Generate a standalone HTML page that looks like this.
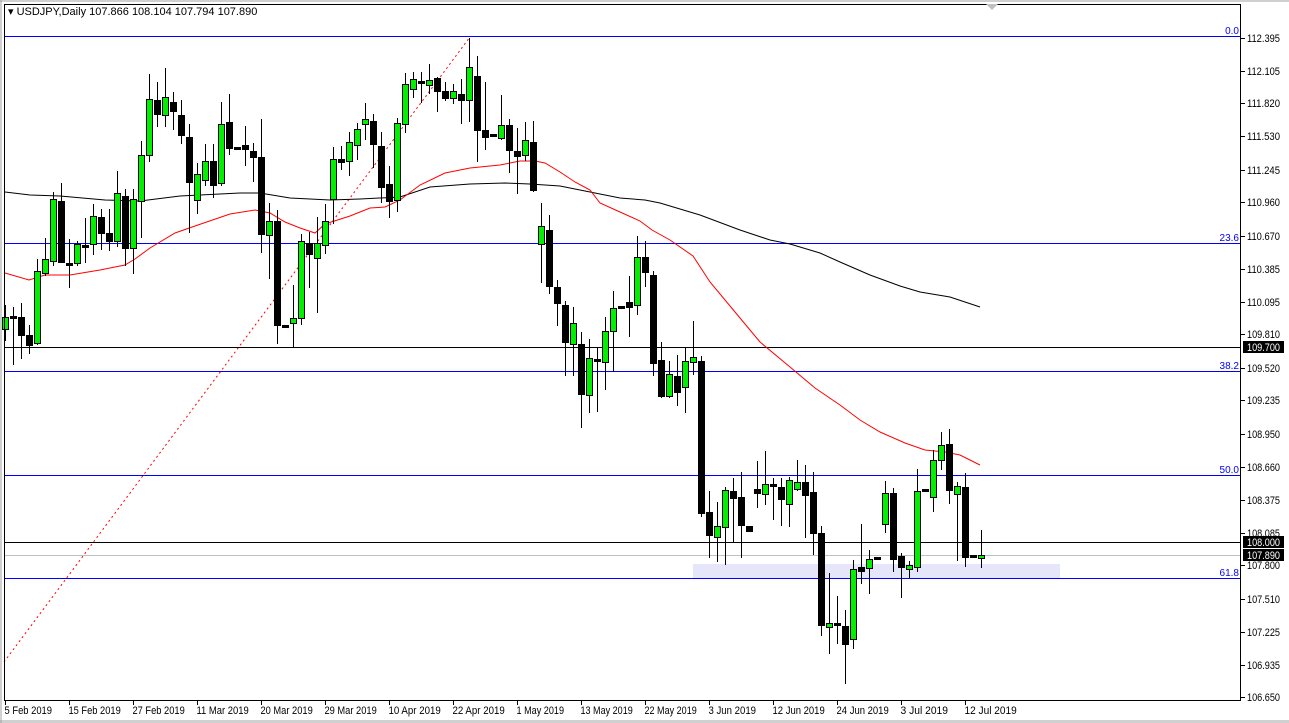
<!DOCTYPE html>
<html><head><meta charset="utf-8"><style>
html,body{margin:0;padding:0;background:#fff;}
svg{display:block;font-family:"Liberation Sans",sans-serif;}
</style></head><body>
<svg id="s" width="1289" height="723" xmlns="http://www.w3.org/2000/svg">
<rect x="0" y="0" width="1289" height="723" fill="#fff"/>
<line x1="0" y1="1" x2="1289" y2="1" stroke="#a0a0a0"/>
<line x1="0" y1="721.5" x2="1289" y2="721.5" stroke="#d0d0d0" stroke-width="3"/>
<line x1="1" y1="0" x2="1" y2="723" stroke="#a0a0a0"/>
<rect x="693" y="564" width="367" height="14" fill="#e6e6fa"/>
<g id="lines"></g>
<g id="cand"></g>
<rect x="4.5" y="4.5" width="1236" height="696" fill="none" stroke="#000"/>
<text x="8" y="15" font-size="11" fill="#000">▾ USDJPY,Daily  107.866 108.104 107.794 107.890</text>
<polygon points="986,4 998,4 992,10" fill="#c0c0c0"/>
<g id="axis" font-size="11"></g>
</svg>
<script>
var NS="http://www.w3.org/2000/svg";
function el(p,t,a,txt){var e=document.createElementNS(NS,t);for(var k in a)e.setAttribute(k,a[k]);if(txt!=null)e.textContent=txt;document.getElementById(p).appendChild(e);return e;}
[[36,"#0000ff"],[243,"#0000ff"],[347,"#000"],[371,"#0000ff"],[475,"#0000ff"],[542,"#000"],[555,"#c0c0c0"],[578,"#0000ff"]].forEach(function(l){
el("lines","line",{x1:5,x2:1240,y1:l[0]+0.5,y2:l[0]+0.5,stroke:l[1]});});
[["0.0",34],["23.6",241],["38.2",369],["50.0",473],["61.8",576]].forEach(function(f){
el("lines","text",{x:1239,y:f[1],"text-anchor":"end","font-size":"10",fill:"#0000ff"},f[0]);});
el("lines","line",{x1:4,y1:662,x2:470,y2:37,stroke:"#ff0000","stroke-dasharray":"2,3"});
var red=[[5,273],[29,280],[45,275],[70,275],[100,270],[125,265],[135,259],[150,248],[175,233],[195,226],[230,214],[255,210],[270,213],[285,222],[300,228],[315,233],[325,224],[350,216],[370,208],[385,207],[400,200],[420,185],[445,173],[470,168],[500,165],[520,161],[535,161],[545,163],[560,172],[575,182],[590,190],[600,203],[620,212],[640,221],[652,230],[670,240],[693,256],[710,282],[740,318],[760,342],[790,367],[815,388],[840,405],[860,420],[880,432],[905,443],[925,450],[945,452],[960,455],[980,465]];
var blk=[[5,192],[30,195],[60,196],[105,200],[140,201],[180,196],[240,193],[260,193],[290,198],[330,200],[360,199],[400,197],[430,187],[470,184],[505,183],[530,184],[560,186],[590,192],[620,198],[645,200],[660,203],[700,215],[740,230],[770,240],[790,244],[820,253],[840,262],[870,275],[900,286],[920,292],[950,297],[980,307]];
el("lines","polyline",{points:blk.join(" "),fill:"none",stroke:"#000"});
el("lines","polyline",{points:red.join(" "),fill:"none",stroke:"#ff0000"});
var C=[[317,329,305,340,1],[316,318,307,364,0],[317,335,303,358,0],[335,345,325,353,0],[271,343,259,344,1],[259,273,238,275,1],[199,261,192,265,1],[201,262,183,262,0],[263,265,239,287,0],[244,263,241,265,1],[245,247,218,262,0],[216,244,204,254,1],[217,233,209,249,0],[233,241,209,250,0],[193,241,171,246,1],[196,248,189,265,0],[199,248,189,273,1],[155,201,141,237,1],[99,155,74,161,1],[100,114,82,126,0],[97,115,68,126,1],[102,111,92,129,0],[115,135,100,143,0],[137,182,124,232,0],[174,200,163,213,1],[161,180,144,185,1],[161,185,144,197,0],[124,183,102,185,1],[122,148,94,154,0],[147,149,147,149,0],[145,149,126,165,0],[151,157,143,181,0],[157,234,119,252,0],[221,235,203,278,1],[221,325,210,343,0],[325,327,325,327,0],[318,323,285,347,1],[241,318,234,324,1],[243,254,232,287,0],[243,258,217,312,1],[221,245,204,253,1],
[159,199,147,223,1],[159,162,146,169,0],[142,161,132,175,1],[129,145,123,159,1],[119,124,103,139,1],[121,144,114,167,0],[146,187,132,202,0],[184,201,166,217,0],[123,200,118,211,1],[84,124,73,132,1],[79,89,72,97,1],[81,83,72,102,0],[80,85,64,93,1],[78,91,77,111,0],[91,98,82,100,0],[91,98,84,103,1],[94,100,79,123,0],[67,100,38,121,1],[76,130,56,161,0],[130,137,82,149,0],[134,136,134,136,0],[125,138,95,139,1],[125,150,119,172,0],[151,156,128,193,0],[140,155,122,160,1],[142,190,121,191,0],[226,244,203,282,1],[230,286,215,293,0],[287,303,280,325,0],[305,342,301,375,0],[323,344,307,375,1],[344,394,332,427,0],[358,395,339,412,1],[359,361,348,411,0],[331,362,317,389,1],[308,331,291,371,1],[306,308,306,308,0],[302,307,276,336,0],[257,305,236,314,1],[257,272,241,286,0],
[275,363,271,375,0],[360,396,342,397,0],[374,396,361,397,1],[376,392,355,405,0],[361,387,347,412,1],[357,362,321,374,1],[361,513,356,516,0],[512,535,491,557,0],[526,537,502,561,1],[490,527,487,564,1],[491,498,478,541,0],[497,525,472,557,0],[526,531,526,531,0],[489,493,461,507,0],[484,494,451,504,1],[484,486,478,519,0],[487,499,478,525,0],[480,504,477,526,1],[482,489,460,490,1],[482,495,465,537,0],[492,533,472,554,0],[533,625,526,635,0],[623,627,573,653,1],[623,625,596,643,0],[626,644,610,683,0],[569,639,560,648,1],[567,571,524,583,0],[559,568,550,593,1],[557,559,557,559,0],[493,524,481,532,1],[493,559,488,571,0],[556,567,553,597,0],[565,569,561,577,1],[491,567,469,571,1],[489,491,489,491,0],[460,497,450,511,1],[445,460,432,469,1],[444,490,429,503,0],[486,494,482,560,1],[487,557,473,566,0],[555,557,555,557,0],[555,558,530,567,1]];
C.forEach(function(c,i){var x=Math.round(5.3+8*i)+0.5;
el("cand","line",{x1:x,x2:x,y1:c[2],y2:c[3]+1,stroke:"#000"});
var h=Math.max(c[1]-c[0],1);
el("cand","rect",{x:x-3,y:c[0]+0.5,width:6,height:h,fill:c[4]?"#00f000":"#000",stroke:"#000"});});
[["112.395",38],["112.105",71],["111.820",103],["111.530",136],["111.245",170],["110.960",202],["110.670",236],["110.385",269],["110.095",302],["109.810",334],["109.520",368],["109.235",400],["108.950",434],["108.660",467],["108.375",500],["108.085",533],["107.800",565],["107.510",599],["107.225",632],["106.935",665],["106.650",697]].forEach(function(a){
el("axis","line",{x1:1241,x2:1245,y1:a[1]+0.5,y2:a[1]+0.5,stroke:"#000"});
el("axis","text",{x:1247,y:a[1]+4,fill:"#000",textLength:33,lengthAdjust:"spacingAndGlyphs"},a[0]);});
[["109.700",347],["108.000",542],["107.890",555]].forEach(function(a){
el("axis","rect",{x:1243,y:a[1]-6,width:41,height:12,fill:"#000"});
el("axis","text",{x:1247,y:a[1]+4,fill:"#fff",textLength:33,lengthAdjust:"spacingAndGlyphs"},a[0]);});
["5 Feb 2019","15 Feb 2019","27 Feb 2019","11 Mar 2019","20 Mar 2019","29 Mar 2019","10 Apr 2019","22 Apr 2019","1 May 2019","13 May 2019","22 May 2019","3 Jun 2019","12 Jun 2019","24 Jun 2019","3 Jul 2019","12 Jul 2019"].forEach(function(d,i){
var x=5+64*i+0.5;
el("axis","line",{x1:x,x2:x,y1:701,y2:705,stroke:"#000"});
var w=d.length*4.75;
el("axis","text",{x:x-1,y:714,fill:"#000",textLength:w,lengthAdjust:"spacingAndGlyphs"},d);});
</script>
</body></html>
